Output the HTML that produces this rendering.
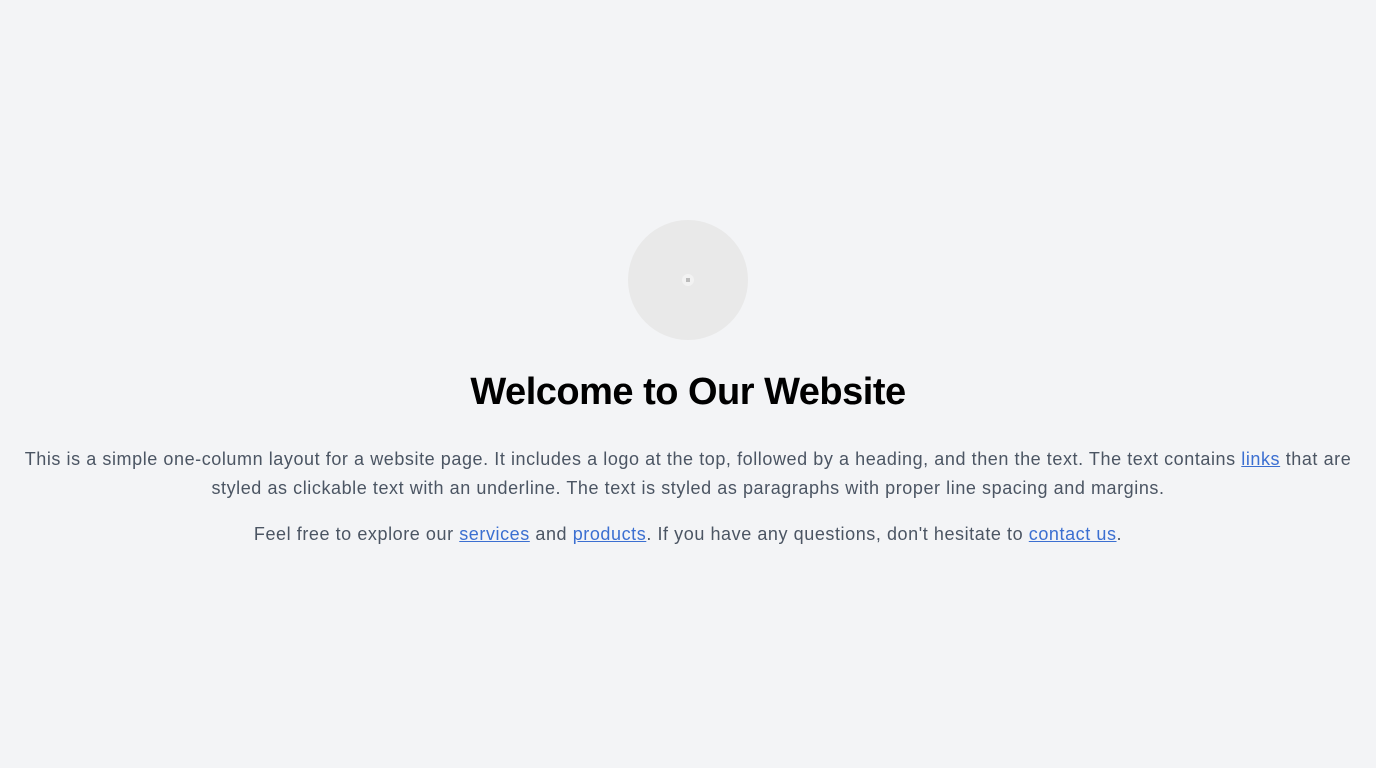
<!DOCTYPE html>
<html><head><meta charset="utf-8"><style>
html,body{margin:0;padding:0;background:#f3f4f6;width:1376px;height:768px;overflow:hidden}
body{font-family:"Liberation Sans",sans-serif;text-align:center;color:#4b5563}
.logo{position:absolute;left:628px;top:220px;width:120px;height:120px;border-radius:50%;background:#e9e9e9}
.logo i{position:absolute;left:54px;top:54px;width:12px;height:12px;border-radius:50%;background:#f2f2f2}
.logo b{position:absolute;left:58px;top:58px;width:4px;height:4px;background:#bbb}
h1{position:absolute;left:0;right:0;top:368px;margin:0;font-size:38px;line-height:48px;color:#000;font-weight:700;letter-spacing:-0.5px}
p{position:absolute;left:0;right:0;margin:0;font-size:18px;line-height:29px;white-space:nowrap;letter-spacing:0.57px}
a{color:#3b6fd1;text-decoration:underline}
</style></head><body>
<div class="logo"><i></i><b></b></div>
<h1>Welcome to Our Website</h1>
<p style="top:445px">This is a simple one-column layout for a website page. It includes a logo at the top, followed by a heading, and then the text. The text contains <a>links</a> that are<br>styled as clickable text with an underline. The text is styled as paragraphs with proper line spacing and margins.</p>
<p style="top:520px">Feel free to explore our <a>services</a> and <a>products</a>. If you have any questions, don't hesitate to <a>contact us</a>.</p>
</body></html>
